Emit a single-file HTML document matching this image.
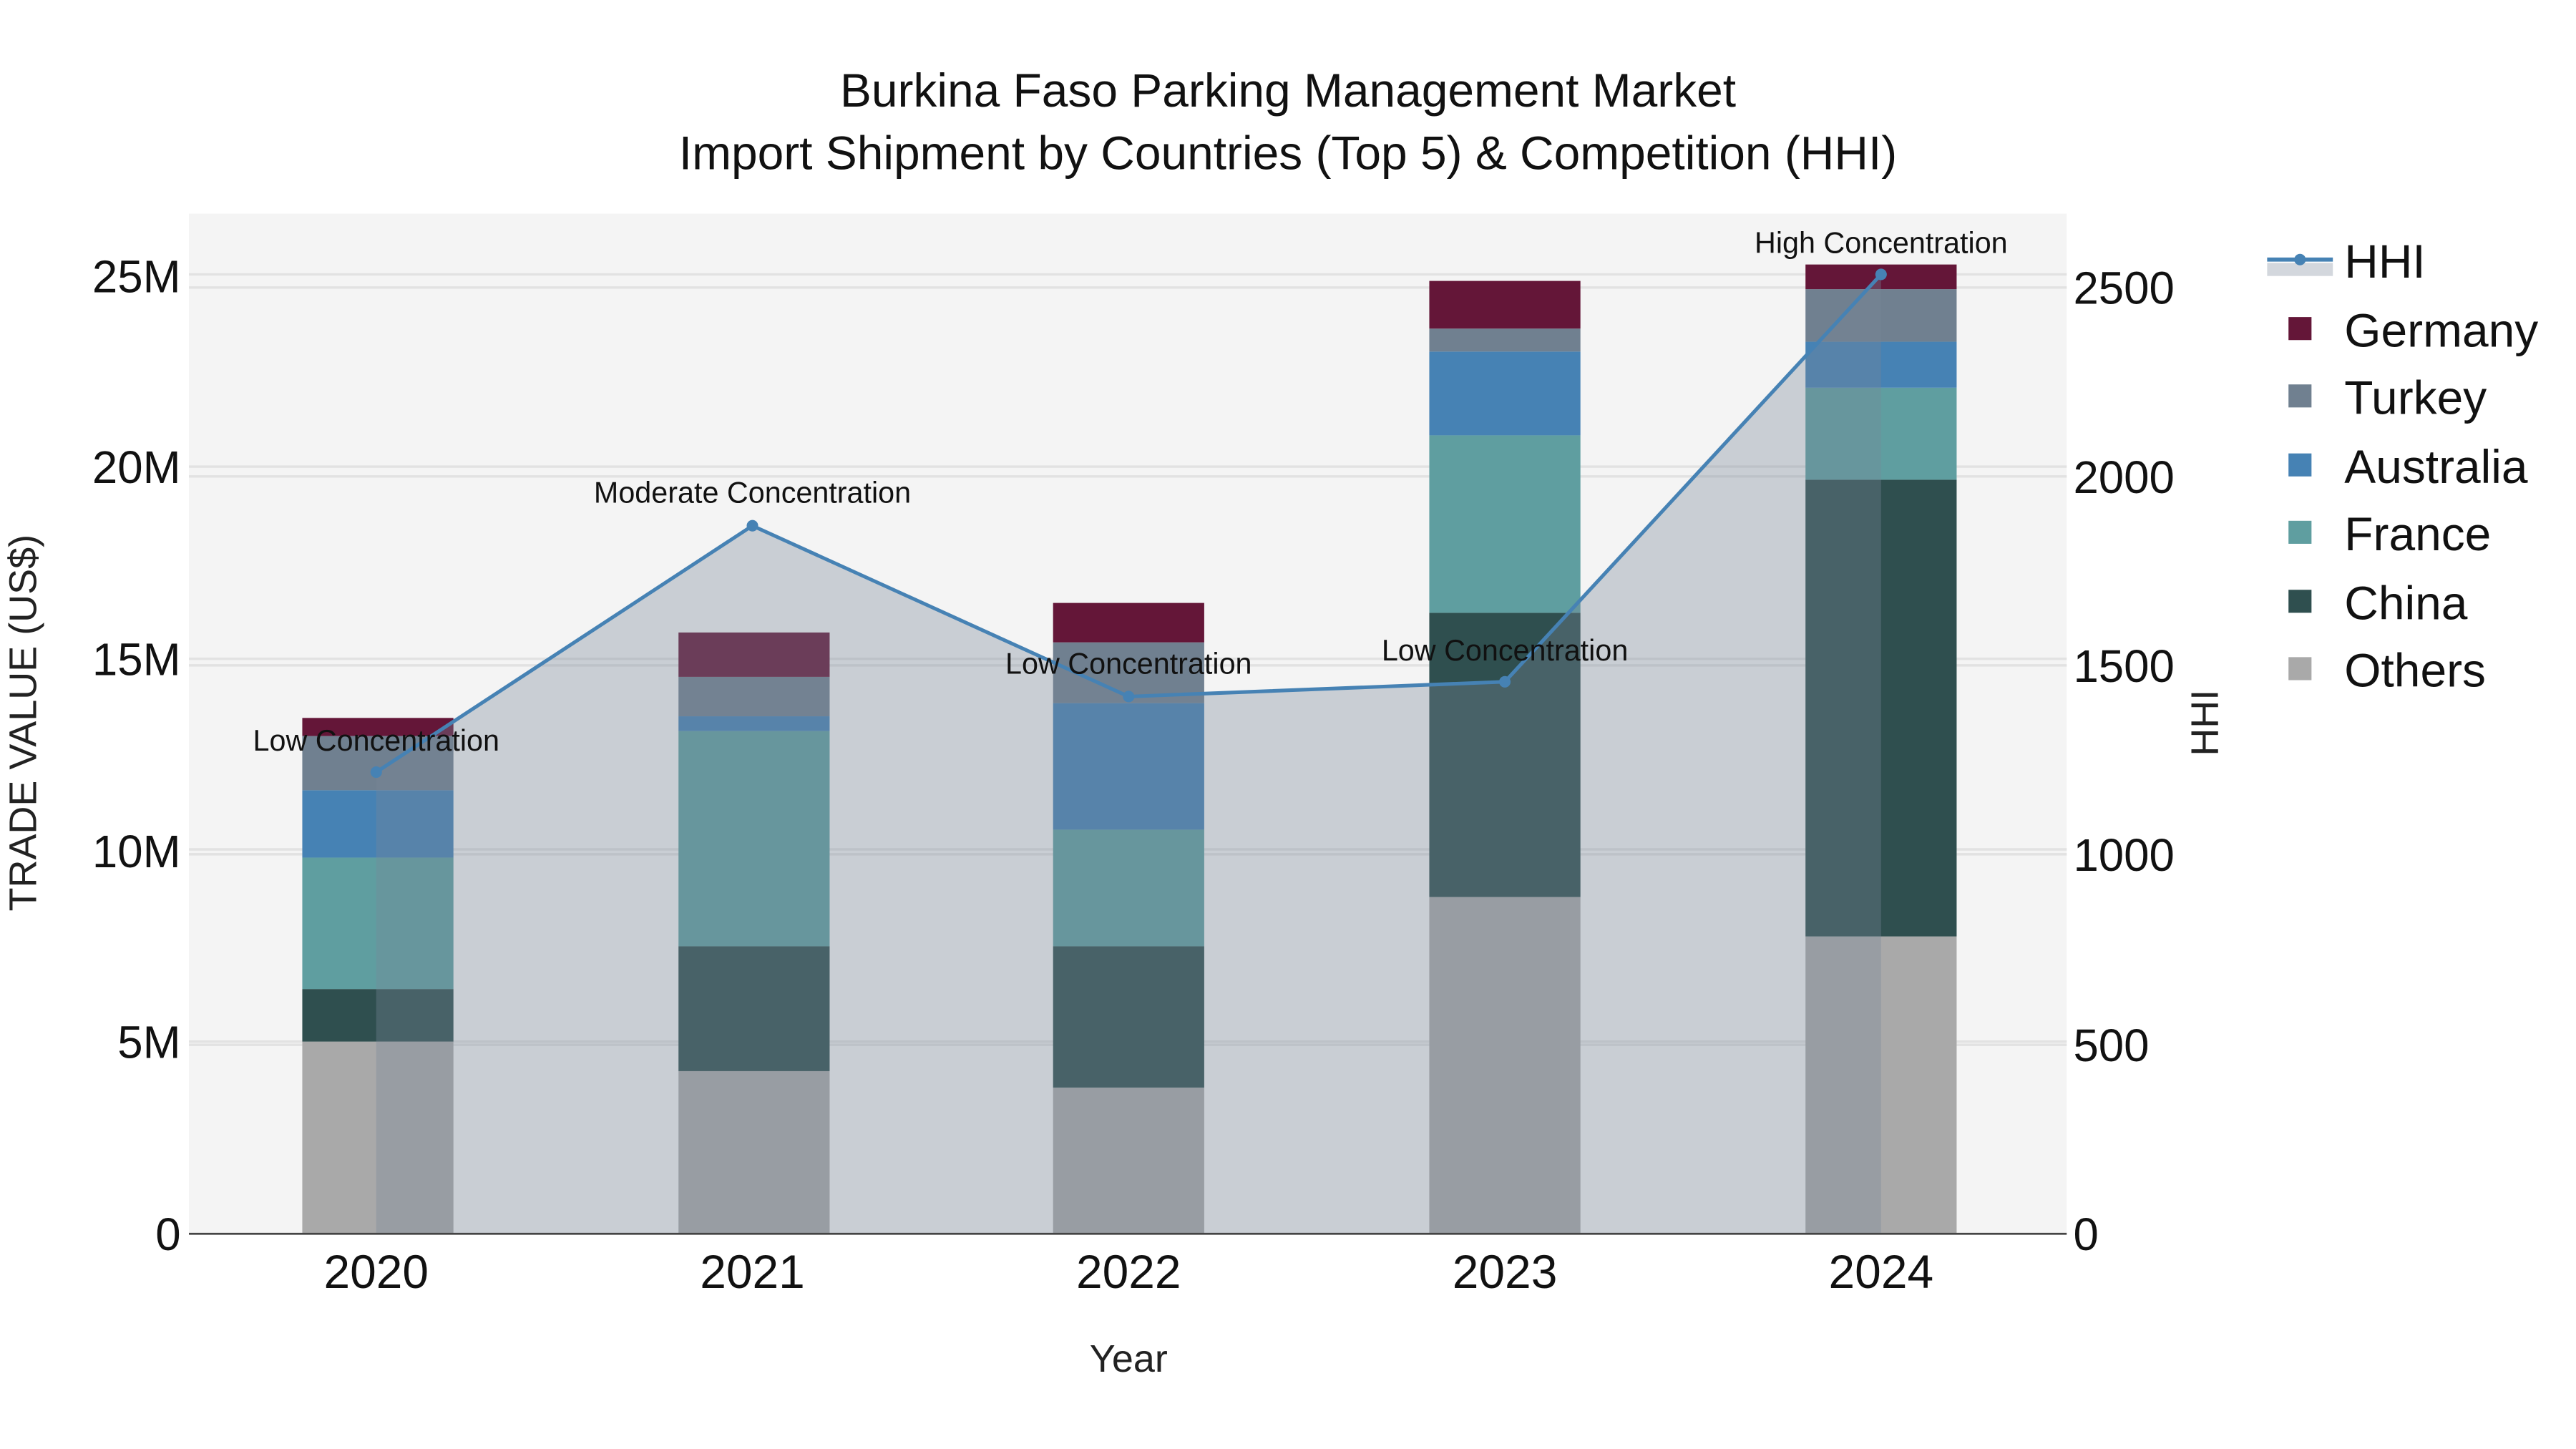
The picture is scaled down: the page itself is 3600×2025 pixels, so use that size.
<!DOCTYPE html>
<html><head><meta charset="utf-8"><style>
html,body{margin:0;padding:0;background:#fff;}
svg{display:block;font-family:"Liberation Sans",sans-serif;}
</style></head><body>
<svg width="3600" height="2025" viewBox="0 0 1568 882" preserveAspectRatio="none">
<rect x="0" y="0" width="1568" height="882" fill="#fff"/>
<rect x="115" y="130" width="1143" height="621" fill="#f4f4f4"/>
<g stroke="#e2e2e2" stroke-width="1.5">
<line x1="115" x2="1258" y1="634" y2="634"/><line x1="115" x2="1258" y1="517" y2="517"/>
<line x1="115" x2="1258" y1="401" y2="401"/><line x1="115" x2="1258" y1="284" y2="284"/>
<line x1="115" x2="1258" y1="167" y2="167"/>
<line x1="115" x2="1258" y1="636" y2="636"/><line x1="115" x2="1258" y1="520" y2="520"/>
<line x1="115" x2="1258" y1="405" y2="405"/><line x1="115" x2="1258" y1="290" y2="290"/>
<line x1="115" x2="1258" y1="175" y2="175"/>
</g>
<g>
<rect x="184" y="634" width="92" height="117" fill="#a9a9a9"/>
<rect x="184" y="602" width="92" height="32" fill="#2f4f4f"/>
<rect x="184" y="522" width="92" height="80" fill="#5f9ea0"/>
<rect x="184" y="481" width="92" height="41" fill="#4682b4"/>
<rect x="184" y="448" width="92" height="33" fill="#708090"/>
<rect x="184" y="437" width="92" height="11" fill="#641638"/>
<rect x="413" y="652" width="92" height="99" fill="#a9a9a9"/>
<rect x="413" y="576" width="92" height="76" fill="#2f4f4f"/>
<rect x="413" y="445" width="92" height="131" fill="#5f9ea0"/>
<rect x="413" y="436" width="92" height="9" fill="#4682b4"/>
<rect x="413" y="412" width="92" height="24" fill="#708090"/>
<rect x="413" y="385" width="92" height="27" fill="#641638"/>
<rect x="641" y="662" width="92" height="89" fill="#a9a9a9"/>
<rect x="641" y="576" width="92" height="86" fill="#2f4f4f"/>
<rect x="641" y="505" width="92" height="71" fill="#5f9ea0"/>
<rect x="641" y="428" width="92" height="77" fill="#4682b4"/>
<rect x="641" y="391" width="92" height="37" fill="#708090"/>
<rect x="641" y="367" width="92" height="24" fill="#641638"/>
<rect x="870" y="546" width="92" height="205" fill="#a9a9a9"/>
<rect x="870" y="373" width="92" height="173" fill="#2f4f4f"/>
<rect x="870" y="265" width="92" height="108" fill="#5f9ea0"/>
<rect x="870" y="214" width="92" height="51" fill="#4682b4"/>
<rect x="870" y="200" width="92" height="14" fill="#708090"/>
<rect x="870" y="171" width="92" height="29" fill="#641638"/>
<rect x="1099" y="570" width="92" height="181" fill="#a9a9a9"/>
<rect x="1099" y="292" width="92" height="278" fill="#2f4f4f"/>
<rect x="1099" y="236" width="92" height="56" fill="#5f9ea0"/>
<rect x="1099" y="208" width="92" height="28" fill="#4682b4"/>
<rect x="1099" y="176" width="92" height="32" fill="#708090"/>
<rect x="1099" y="161" width="92" height="15" fill="#641638"/>
</g>
<polygon points="229,751 229,470 458,320 687,424 916,415 1145,167 1145,751" fill="rgba(119,136,153,0.35)"/>
<polyline points="229,470 458,320 687,424 916,415 1145,167" fill="none" stroke="#4682b4" stroke-width="2.2"/>
<g fill="#4682b4"><circle cx="229" cy="470" r="3.5"/><circle cx="458" cy="320" r="3.5"/><circle cx="687" cy="424" r="3.5"/><circle cx="916" cy="415" r="3.5"/><circle cx="1145" cy="167" r="3.5"/></g>
<line x1="115" x2="1258" y1="751" y2="751" stroke="#444" stroke-width="1.2"/>
<g font-size="18" fill="#111" text-anchor="middle">
<text x="229" y="457">Low Concentration</text>
<text x="458" y="306">Moderate Concentration</text>
<text x="687" y="410">Low Concentration</text>
<text x="916" y="402">Low Concentration</text>
<text x="1145" y="154">High Concentration</text>
</g>
<g font-size="28.7" fill="#111" text-anchor="middle">
<text x="784" y="65">Burkina Faso Parking Management Market</text>
<text x="784" y="103">Import Shipment by Countries (Top 5) &amp; Competition (HHI)</text>
</g>
<g font-size="27.7" fill="#111" text-anchor="end">
<text x="110" y="761">0</text><text x="110" y="644">5M</text><text x="110" y="528">10M</text>
<text x="110" y="411">15M</text><text x="110" y="294">20M</text><text x="110" y="178">25M</text>
</g>
<g font-size="27.7" fill="#111" text-anchor="start">
<text x="1262" y="761">0</text><text x="1262" y="646">500</text><text x="1262" y="530">1000</text>
<text x="1262" y="415">1500</text><text x="1262" y="300">2000</text><text x="1262" y="185">2500</text>
</g>
<g font-size="28.7" fill="#111" text-anchor="middle">
<text x="229" y="784">2020</text><text x="458" y="784">2021</text><text x="687" y="784">2022</text>
<text x="916" y="784">2023</text><text x="1145" y="784">2024</text>
</g>
<text x="687" y="835" font-size="23.5" fill="#222" text-anchor="middle">Year</text>
<text transform="translate(22,440) rotate(-90)" font-size="23.5" fill="#222" text-anchor="middle">TRADE VALUE (US$)</text>
<text transform="translate(1350,440) rotate(-90)" font-size="23.5" fill="#222" text-anchor="middle">HHI</text>
<rect x="1380" y="160" width="40" height="8" fill="#d3d7dd"/>
<line x1="1380" x2="1420" y1="158" y2="158" stroke="#4682b4" stroke-width="2.5"/>
<circle cx="1400" cy="158" r="3.5" fill="#4682b4"/>
<g font-size="28.7" fill="#111">
<text x="1427" y="169">HHI</text>
<rect x="1393" y="193" width="14" height="14" fill="#641638"/><text x="1427" y="211">Germany</text>
<rect x="1393" y="234" width="14" height="14" fill="#708090"/><text x="1427" y="252">Turkey</text>
<rect x="1393" y="276" width="14" height="14" fill="#4682b4"/><text x="1427" y="294">Australia</text>
<rect x="1393" y="317" width="14" height="14" fill="#5f9ea0"/><text x="1427" y="335">France</text>
<rect x="1393" y="359" width="14" height="14" fill="#2f4f4f"/><text x="1427" y="377">China</text>
<rect x="1393" y="400" width="14" height="14" fill="#a9a9a9"/><text x="1427" y="418">Others</text>
</g>
</svg>
</body></html>
